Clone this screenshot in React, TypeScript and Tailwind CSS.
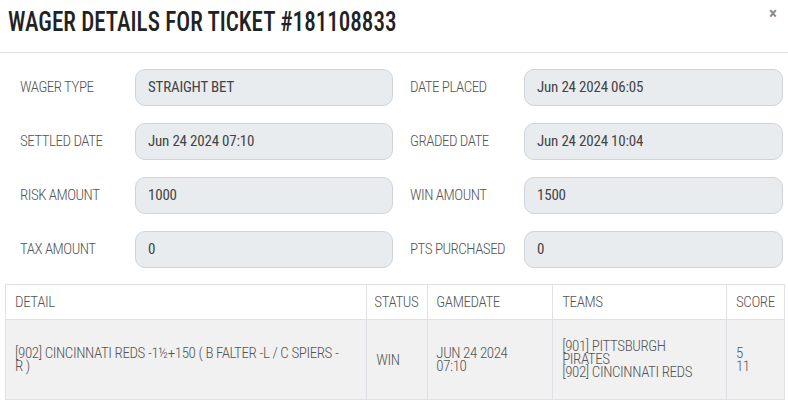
const font = { fontFamily: '"Roboto Condensed", Roboto, "Liberation Sans", sans-serif' };

const fields = [
  ["WAGER TYPE", "STRAIGHT BET", "DATE PLACED", "Jun 24 2024 06:05"],
  ["SETTLED DATE", "Jun 24 2024 07:10", "GRADED DATE", "Jun 24 2024 10:04"],
  ["RISK AMOUNT", "1000", "WIN AMOUNT", "1500"],
  ["TAX AMOUNT", "0", "PTS PURCHASED", "0"],
];

const Field = ({ label, value, labelW, inputW }: any) => (
  <div className="flex items-center">
    <div className={`${labelW} text-[15px] font-light tracking-[-0.5px] text-[#555]`}>{label}</div>
    <div
      className={`${inputW} h-[37px] flex items-center px-[12px] rounded-[10px] bg-[#e9ecef] border border-[#ced4da] text-[15px] tracking-[-0.2px] text-[#444]`}
    >
      {value}
    </div>
  </div>
);

export default function App() {
  return (
    <div className="w-[788px] h-[401px] bg-white overflow-hidden" style={font}>
      <div className="h-[53px] flex justify-between items-start border-b border-[#dee2e6] pl-[8px]">
        <h1 className="inline-block origin-left scale-x-[0.855] whitespace-nowrap text-[27px] leading-[32px] pt-[6px] font-medium text-[#222]">
          WAGER DETAILS FOR TICKET #181108833
        </h1>
        <button className="mr-[11px] mt-[1px] text-[17px] font-bold text-[#888]">×</button>
      </div>

      <div className="pt-[16px] flex flex-col gap-[17px] pl-[20px]">
        {fields.map((f, i) => (
          <div key={i} className="flex">
            <Field label={f[0]} value={f[1]} labelW="w-[115px]" inputW="w-[258px]" />
            <div className="ml-[17px]">
              <Field label={f[2]} value={f[3]} labelW="w-[114px]" inputW="w-[259px]" />
            </div>
          </div>
        ))}
      </div>

      <table className="mt-[16px] ml-[5px] w-[780px] border-collapse text-[#555] font-light tracking-[-0.4px]">
        <thead>
          <tr className="h-[35px] text-[15px] text-left">
            <th className="w-[362px] border border-[#dee2e6] px-[9px] font-light">DETAIL</th>
            <th className="w-[61px] border border-[#dee2e6] px-[7px] font-light">STATUS</th>
            <th className="w-[125px] border border-[#dee2e6] px-[8px] font-light">GAMEDATE</th>
            <th className="w-[174px] border border-[#dee2e6] px-[9px] font-light">TEAMS</th>
            <th className="w-[58px] border border-[#dee2e6] px-[9px] font-light">SCORE</th>
          </tr>
        </thead>
        <tbody>
          <tr className="h-[80px] bg-[#f1f1f1] text-[15px] leading-[13px] align-middle">
            <td className="border border-[#dee2e6] px-[9px]">
              [902] CINCINNATI REDS -1½+150 ( B FALTER -L / C SPIERS -
              <br />
              R )
            </td>
            <td className="border border-[#dee2e6] px-[9px] leading-[16px]">WIN</td>
            <td className="border border-[#dee2e6] px-[8px]">
              JUN 24 2024
              <br />
              07:10
            </td>
            <td className="border border-[#dee2e6] px-[9px]">
              [901] PITTSBURGH
              <br />
              PIRATES
              <br />
              [902] CINCINNATI REDS
            </td>
            <td className="border border-[#dee2e6] px-[9px]">
              5
              <br />
              11
            </td>
          </tr>
        </tbody>
      </table>
    </div>
  );
}
